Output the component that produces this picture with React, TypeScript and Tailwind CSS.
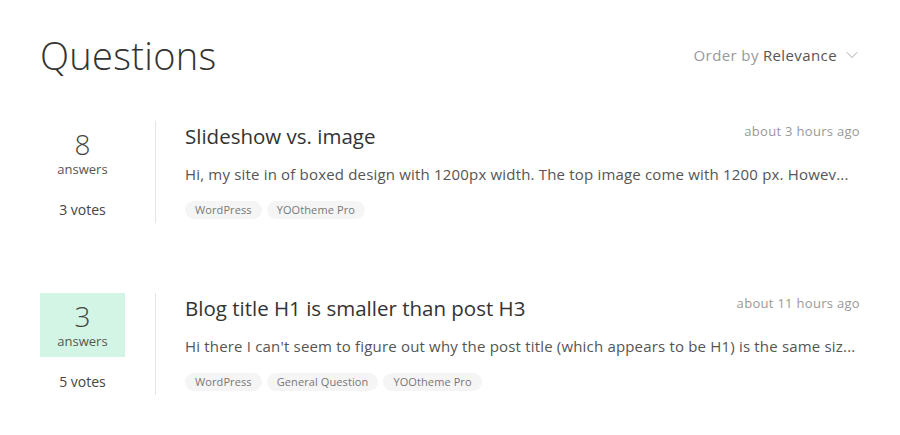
import { ChevronDown } from "lucide-react";

type Question = {
	answers: number;
	votes: number;
	title: string;
	excerpt: string;
	time: string;
	tags: string[];
	answered?: boolean;
};

const questions: Question[] = [
	{
		answers: 8,
		votes: 3,
		title: "Slideshow vs. image",
		excerpt: "Hi, my site in of boxed design with 1200px width. The top image come with 1200 px. Howev...",
		time: "about 3 hours ago",
		tags: ["WordPress", "YOOtheme Pro"],
	},
	{
		answers: 3,
		votes: 5,
		title: "Blog title H1 is smaller than post H3",
		excerpt: "Hi there I can't seem to figure out why the post title (which appears to be H1) is the same siz...",
		time: "about 11 hours ago",
		tags: ["WordPress", "General Question", "YOOtheme Pro"],
		answered: true,
	},
];

function QuestionRow({ q }: { q: Question }) {
	return (
		<div className="flex">
			<div className="w-[85px] shrink-0 text-center text-[#444]">
				<div className={`flex h-[64px] flex-col items-center justify-center ${q.answered ? "bg-[#d3f5e5]" : ""}`}>
					<div className="text-[28px] font-light leading-[30px]">{q.answers}</div>
					<div className="mt-[2px] text-[13px] leading-4 text-[#555]">answers</div>
				</div>
				<div className="mt-[17px] text-[14px] leading-4">{q.votes} votes</div>
			</div>
			<div className="ml-[30px] w-px shrink-0 bg-[#e5e5e5]" />
			<div className="min-w-0 flex-1 pl-[29px]">
				<div className="flex items-start justify-between">
					<h3 className="mt-[1px] text-[20.5px] leading-7 text-[#333]">{q.title}</h3>
					<span className="shrink-0 text-[13px] leading-5 tracking-[0.3px] text-[#999]">{q.time}</span>
				</div>
				<p className="mt-[14px] whitespace-nowrap text-[15px] leading-5 tracking-[0.18px] text-[#555]">{q.excerpt}</p>
				<div className="mt-[17px] flex gap-[5px] pb-[4px]">
					{q.tags.map((t) => (
						<span key={t} className="rounded-full bg-[#f5f5f5] px-[10px] text-[11px] leading-[18px] tracking-[0.1px] text-[#777]">
							{t}
						</span>
					))}
				</div>
			</div>
		</div>
	);
}

export default function App() {
	return (
		<div className="min-h-[435px] bg-white px-[40px] pt-[30px] font-['Open_Sans','Liberation_Sans',sans-serif]">
			<div className="flex items-center justify-between">
				<h1 className="text-[38px] font-light leading-[50px] tracking-[0.3px] text-[#333]">Questions</h1>
				<div className="flex items-center text-[15px] tracking-[0.4px] text-[#999]">
					Order by <span className="ml-1 text-[#555]">Relevance</span>
					<ChevronDown className="ml-[5px] mr-[-2px] h-5 w-5" strokeWidth={1} />
				</div>
			</div>
			<div className="mt-[41px] flex flex-col gap-[70px]">
				{questions.map((q) => (
					<QuestionRow key={q.title} q={q} />
				))}
			</div>
		</div>
	);
}
